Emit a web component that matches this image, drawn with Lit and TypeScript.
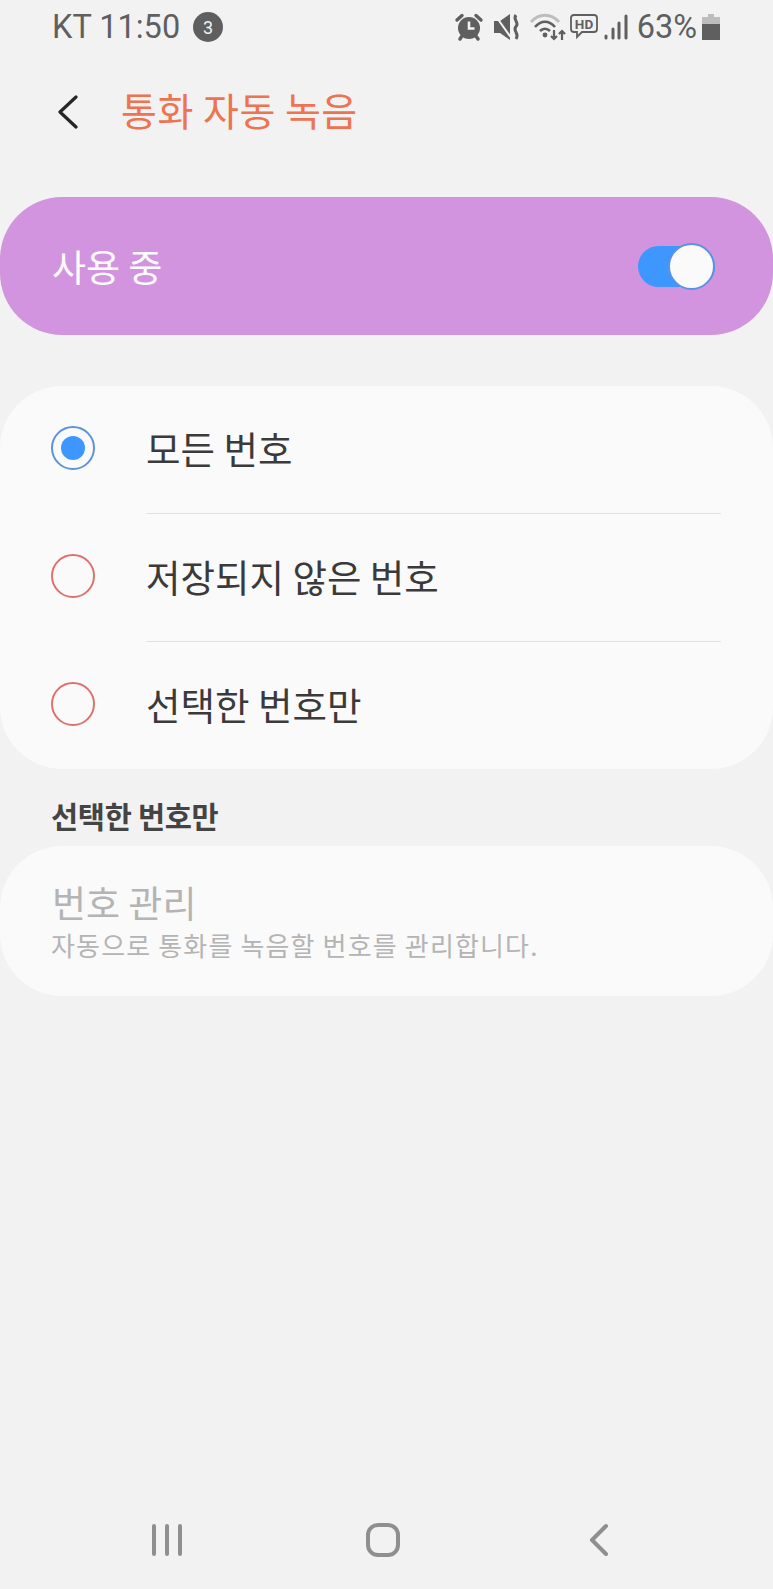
import {LitElement, html, css} from 'lit';
import {customElement} from 'lit/decorators.js';

@customElement('app-root')
export class AppRoot extends LitElement {
  static styles = css`
    :host {
      display: block;
      font-family: "Noto Sans CJK KR", "Noto Sans", sans-serif;
    }

    .page {
      display: flex;
      flex-direction: column;
      height: 1589px;
      overflow: hidden;
      background: #f2f2f2;
      color: #3a3a3a;
    }

    .status {
      display: flex;
      align-items: center;
      height: 52px;
      padding: 2px 53px 0 52px;
      box-sizing: border-box;
      color: #5f5f5f;
      font-family: Roboto, sans-serif;
    }

    .clock {
      font-size: 32.5px;
      line-height: 50px;
    }

    .badge {
      display: flex;
      align-items: center;
      justify-content: center;
      width: 30px;
      height: 30px;
      margin-left: 13px;
      border-radius: 50%;
      background: #5f5f5f;
      color: #f2f2f2;
      font-size: 18px;
    }

    .status-icons {
      display: flex;
      align-items: center;
      margin-left: auto;
      gap: 6px;
    }

    .status-icons .spaced {
      margin-left: 3px;
    }

    .status-icons .tight {
      margin-left: -2px;
    }

    .percent {
      font-size: 32.5px;
      line-height: 50px;
      margin: 0 -1px 0 3px;
    }

    .header {
      display: flex;
      align-items: center;
      height: 116px;
      padding-left: 57px;
    }

    .back-arrow {
      margin-top: 3px;
    }

    .title {
      margin: -2px 0 0 42px;
      color: #ee7350;
      font-size: 39px;
      line-height: 50px;
      letter-spacing: 0.5px;
    }

    .master {
      display: flex;
      align-items: center;
      justify-content: space-between;
      height: 138px;
      margin-top: 29px;
      padding: 0 58px 0 52px;
      border-radius: 62px;
      background: #d394df;
      color: #fbfbfb;
      font-size: 37px;
    }

    .toggle {
      display: flex;
      align-items: center;
      width: 77px;
      height: 41px;
      border-radius: 21px;
      background: #3e96ff;
      position: relative;
    }

    .thumb {
      position: absolute;
      right: 0;
      top: -3px;
      box-sizing: border-box;
      width: 47px;
      height: 47px;
      border: 2px solid #5b93e0;
      border-radius: 50%;
      background: #fafafa;
    }

    .card {
      border-radius: 62px;
      background: #fafafa;
    }

    .options {
      margin-top: 51px;
    }

    .option {
      display: flex;
      align-items: center;
      box-sizing: border-box;
      height: 127px;
      padding: 0 0 4px 51px;
      font-size: 37.5px;
    }

    .radio {
      display: flex;
      flex: none;
      align-items: center;
      justify-content: center;
      box-sizing: border-box;
      width: 44px;
      height: 44px;
      margin-right: 51px;
      border: 2px solid #e07070;
      border-radius: 50%;
    }

    .radio.on {
      border-color: #5b93dd;
    }

    .radio.on::after {
      content: "";
      width: 24px;
      height: 24px;
      border-radius: 50%;
      background: #3e96ff;
    }

    .divider {
      height: 1px;
      margin: 0 52px 0 146px;
      background: #e2e2e2;
    }

    .section {
      margin-top: 26px;
      padding-left: 51px;
      color: #444;
      font-size: 29.5px;
      font-weight: 700;
      line-height: 40px;
      letter-spacing: -0.3px;
    }

    .manage {
      height: 150px;
      margin-top: 11px;
      padding: 31px 0 0 52px;
      box-sizing: border-box;
      color: #b4b4b4;
    }

    .manage-title {
      font-size: 37px;
      line-height: 50px;
    }

    .manage-sub {
      font-size: 26px;
      line-height: 36px;
      margin-left: -1px;
      letter-spacing: 1.15px;
    }

    .nav {
      display: flex;
      align-items: center;
      margin-top: auto;
      height: 98px;
      padding-left: 150px;
      box-sizing: border-box;
    }

    .nav svg {
      stroke: #8f8f8f;
      fill: none;
      stroke-linecap: round;
      stroke-linejoin: round;
    }

    .nav .home {
      margin-left: 181px;
    }

    .nav .back {
      margin-left: 187px;
    }
  `;

  renderStatusIcons() {
    return html`
      <div class="status-icons">
        <svg width="30" height="28" viewBox="0 0 30 28">
          <path d="M3 7 L8 2.5 M27 7 L22 2.5" stroke="#5f5f5f" stroke-width="3.4" stroke-linecap="round"/>
          <circle cx="15" cy="15" r="11" fill="#5f5f5f"/>
          <path d="M15 8.5 V15.5 H20.5" stroke="#f2f2f2" stroke-width="2.6" fill="none"/>
          <path d="M8 23 L6 26 M22 23 L24 26" stroke="#5f5f5f" stroke-width="3.4" stroke-linecap="round"/>
        </svg>
        <svg class="spaced" width="28" height="28" viewBox="0 0 28 28">
          <path d="M1 8 H7 L17 1 V27 L7 20 H1 Z" fill="#5f5f5f"/>
          <path d="M2 2 L19 26" stroke="#f2f2f2" stroke-width="2"/>
          <path d="M23 2 C19 7 27 9 23 13.5 C19 18 27 20 23 26" stroke="#5f5f5f" stroke-width="3" fill="none"/>
        </svg>
        <svg class="spaced" width="36" height="28" viewBox="0 0 36 28">
          <path d="M1 9 C9 0 21 0 29 9" stroke="#bdbdbd" stroke-width="2.8" fill="none"/>
          <path d="M5 14 C11 7 19 7 25 14" stroke="#5f5f5f" stroke-width="2.6" fill="none"/>
          <path d="M10 18 C13 15 17 15 20 18" stroke="#5f5f5f" stroke-width="2.6" fill="none"/>
          <circle cx="15" cy="22" r="2.4" fill="#5f5f5f"/>
          <path d="M24 17 V26 M21 23 L24 26 L27 23" stroke="#5f5f5f" stroke-width="2.2" fill="none"/>
          <path d="M32 27 V18 M29 21 L32 18 L35 21" stroke="#5f5f5f" stroke-width="2.2" fill="none"/>
        </svg>
        <svg class="tight" width="28" height="26" viewBox="0 0 28 26">
          <path d="M4 1 H24 Q27 1 27 4 V15 Q27 18 24 18 H12 L7 23 V18 H4 Q1 18 1 15 V4 Q1 1 4 1 Z" stroke="#5f5f5f" stroke-width="1.8" fill="none"/>
          <text x="14" y="14.5" text-anchor="middle" font-family="Roboto, sans-serif" font-size="13.5" font-weight="700" fill="#5f5f5f">HD</text>
        </svg>
        <svg width="24" height="26" viewBox="0 0 24 26">
          <path d="M2 22 V24 M9 15 V24 M15 9 V24 M22 2 V24" stroke="#5f5f5f" stroke-width="3" stroke-linecap="round"/>
        </svg>
        <span class="percent">63%</span>
        <svg width="18" height="26" viewBox="0 0 18 26">
          <path d="M6 0 H12 V3 H6 Z" fill="#bdbdbd"/>
          <path d="M0 3 H18 V10 H0 Z" fill="#bdbdbd"/>
          <path d="M0 10 H18 V26 H0 Z" fill="#5f5f5f"/>
        </svg>
      </div>
    `
  }

  renderOption(label: string, selected = false) {
    return html`
      <div class="option">
        <span class="radio ${selected ? 'on' : ''}"></span>
        <span>${label}</span>
      </div>
    `
  }

  render() {
    return html`
      <div class="page">
        <div class="status">
          <span class="clock">KT 11:50</span>
          <span class="badge">3</span>
          ${this.renderStatusIcons()}
        </div>

        <div class="header">
          <svg class="back-arrow" width="22" height="34" viewBox="0 0 22 34">
            <path d="M19 2 L3 17 L19 32" stroke="#262626" stroke-width="3.2" fill="none" stroke-linecap="round" stroke-linejoin="round"/>
          </svg>
          <span class="title">통화 자동 녹음</span>
        </div>

        <div class="master">
          <span>사용 중</span>
          <div class="toggle"><span class="thumb"></span></div>
        </div>

        <div class="card options">
          ${this.renderOption('모든 번호', true)}
          <div class="divider"></div>
          ${this.renderOption('저장되지 않은 번호')}
          <div class="divider"></div>
          ${this.renderOption('선택한 번호만')}
        </div>

        <div class="section">선택한 번호만</div>

        <div class="card manage">
          <div class="manage-title">번호 관리</div>
          <div class="manage-sub">자동으로 통화를 녹음할 번호를 관리합니다.</div>
        </div>

        <div class="nav">
          <svg width="34" height="34" viewBox="0 0 34 34" stroke-width="4">
            <path d="M4 3 V31 M17 3 V31 M30 3 V31"/>
          </svg>
          <svg class="home" width="36" height="36" viewBox="0 0 36 36" stroke-width="4">
            <rect x="3" y="3" width="30" height="30" rx="10"/>
          </svg>
          <svg class="back" width="22" height="34" viewBox="0 0 22 34" stroke-width="4">
            <path d="M18 3 L4 17 L18 31"/>
          </svg>
        </div>
      </div>
    `
  }
}
